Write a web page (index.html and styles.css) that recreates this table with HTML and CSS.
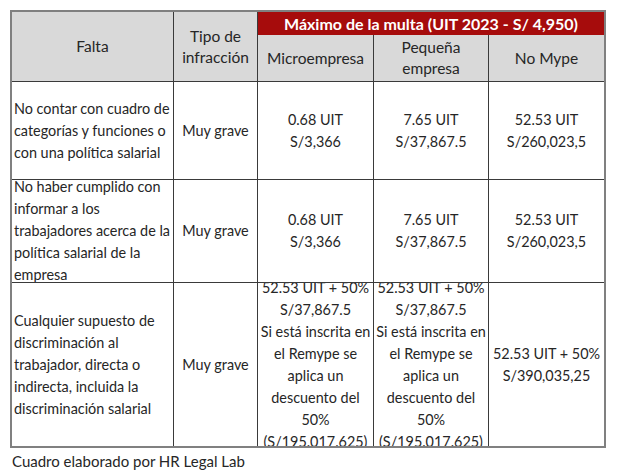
FILE: index.html
```html
<!DOCTYPE html>
<html lang="es">
<head>
<meta charset="utf-8">
<title>Multas</title>
<link rel="stylesheet" href="styles.css">
</head>
<body>
<div class="table">
  <div class="cell head">Falta</div>
  <div class="cell head">Tipo de<br>infracción</div>
  <div class="cell group">
    <div class="band">Máximo de la multa (UIT 2023 - S/ 4,950)</div>
    <div class="subs">
      <div class="cell head">Microempresa</div>
      <div class="cell head">Pequeña<br>empresa</div>
      <div class="cell head">No Mype</div>
    </div>
  </div>

  <div class="cell left">No contar con cuadro de<br>categorías y funciones o<br>con una política salarial</div>
  <div class="cell">Muy grave</div>
  <div class="cell">0.68 UIT<br>S/3,366</div>
  <div class="cell">7.65 UIT<br>S/37,867.5</div>
  <div class="cell">52.53 UIT<br>S/260,023,5</div>

  <div class="cell left">No haber cumplido con<br>informar a los<br>trabajadores acerca de la<br>política salarial de la<br>empresa</div>
  <div class="cell">Muy grave</div>
  <div class="cell">0.68 UIT<br>S/3,366</div>
  <div class="cell">7.65 UIT<br>S/37,867.5</div>
  <div class="cell">52.53 UIT<br>S/260,023,5</div>

  <div class="cell left">Cualquier supuesto de<br>discriminación al<br>trabajador, directa o<br>indirecta, incluida la<br>discriminación salarial</div>
  <div class="cell">Muy grave</div>
  <div class="cell">52.53 UIT + 50%<br>S/37,867.5<br>Si está inscrita en<br>el Remype se<br>aplica un<br>descuento del<br>50%<br>(S/195.017.625)</div>
  <div class="cell">52.53 UIT + 50%<br>S/37,867.5<br>Si está inscrita en<br>el Remype se<br>aplica un<br>descuento del<br>50%<br>(S/195.017.625)</div>
  <div class="cell">52.53 UIT + 50%<br>S/390,035,25</div>
</div>
<p class="note">Cuadro elaborado por HR Legal Lab</p>
</body>
</html>
```
FILE: styles.css
```css
html, body {
  margin: 0;
  padding: 0;
  background: #ffffff;
}
body {
  font-family: Lato, "Open Sans", "Liberation Sans", sans-serif;
  color: #262626;
  font-size: 14.4px;
  line-height: 22px;
}
.table {
  margin: 10px 0 0 10px;
  width: 592px;
  border: 2px solid #808080;
  background: #3a3a3a;
  display: grid;
  grid-template-columns: 161px 83px 115px 114px 115px;
  grid-template-rows: 69px 97px 102px 163px;
  gap: 1px;
}
.cell {
  background: #ffffff;
  display: flex;
  align-items: center;
  justify-content: center;
  text-align: center;
  overflow: hidden;
  white-space: nowrap;
}
.cell.left {
  justify-content: flex-start;
  text-align: left;
  padding-left: 2px;
}
.head {
  background: #d9d9d9;
  font-size: 15.5px;
  line-height: 21px;
}
.group {
  grid-column: span 3;
  flex-direction: column;
  align-items: stretch;
  justify-content: flex-start;
  background: #d9d9d9;
}
.band {
  height: 23px;
  background: #a60c0c;
  color: #ffffff;
  font-size: 16px;
  font-weight: 700;
  line-height: 23px;
  text-align: center;
}
.subs {
  flex: 1;
  display: grid;
  grid-template-columns: 115px 114px 115px;
  gap: 1px;
  background: #3a3a3a;
}
.note {
  margin: 2px 0 0 12px;
  font-size: 15px;
  line-height: 22px;
}
```
